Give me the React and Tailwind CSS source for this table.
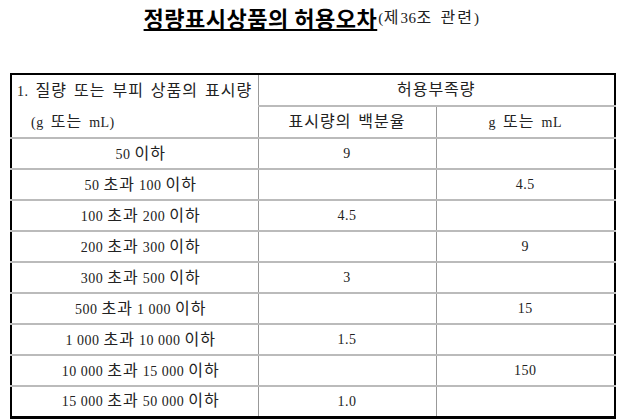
import React from 'react';

const rows = [
  ['50 이하', '9', ''],
  ['50 초과 100 이하', '', '4.5'],
  ['100 초과 200 이하', '4.5', ''],
  ['200 초과 300 이하', '', '9'],
  ['300 초과 500 이하', '3', ''],
  ['500 초과 1 000 이하', '', '15'],
  ['1 000 초과 10 000 이하', '1.5', ''],
  ['10 000 초과 15 000 이하', '', '150'],
  ['15 000 초과 50 000 이하', '1.0', ''],
];

const serif = { fontFamily: '"Liberation Serif", "Noto Sans CJK KR", serif' };

// hangul in the source font is wider than Noto's, so give it its own size
const K = ({ children, wide }) => {
  const parts = String(children).split(/([\uAC00-\uD7A3]+)/);
  return (
    <>
      {parts.map((p, i) =>
        /[\uAC00-\uD7A3]/.test(p) ? (
          <span key={i} className={wide ? 'text-[16px] tracking-[2px]' : 'text-[16px] tracking-[1px]'}>{p}</span>
        ) : (
          <span key={i}>{p}</span>
        )
      )}
    </>
  );
};

export default function App() {
  return (
    <div className="w-[623px] h-[419px] overflow-hidden bg-white text-[#222]" style={serif}>
      <div className="flex justify-center items-end h-[30px]">
        <span
          className="text-[22px] font-bold leading-[26px] tracking-[0.5px] underline decoration-2 underline-offset-[2px] text-black"
          style={{ fontFamily: '"Noto Sans CJK KR", sans-serif' }}
        >
          정량표시상품의 허용오차
        </span>
        <span className="text-[15px] leading-[24px] ml-[1px] tracking-[0.5px] [word-spacing:3px]"><K wide>(제36조 관련)</K></span>
      </div>

      <table className="ml-[10px] mt-[43px] w-[604px] border-collapse border-2 border-black text-[14px] tracking-[0.5px] table-fixed">
        <colgroup>
          <col className="w-[247px]" />
          <col className="w-[178px]" />
          <col className="w-[179px]" />
        </colgroup>
        <thead>
          <tr className="h-[31px]">
            <td rowSpan={2} className="align-top border-r border-[#999] border-b-2 border-b-[#bbb] pl-[5px] pt-0 leading-[31px] font-normal text-left whitespace-nowrap [word-spacing:3px]">
              <div className="h-[31px]"><K>1. 질량 또는 부피 상품의 표시량</K></div>
              <div className="h-[31px] pl-[14px]"><K>(g 또는 mL)</K></div>
            </td>
            <td colSpan={2} className="text-center border-b-2 border-[#bbb]"><K>허용부족량</K></td>
          </tr>
          <tr className="h-[31px] [word-spacing:3px]">
            <td className="text-center border-r border-[#999] border-b-2 border-b-[#bbb]"><K>표시량의 백분율</K></td>
            <td className="text-center border-b-2 border-[#bbb]"><K>g 또는 mL</K></td>
          </tr>
        </thead>
        <tbody>
          {rows.map((r, i) => (
            <tr key={i} className={i === rows.length - 1 ? 'h-[31px] border-b-[3px] border-black' : 'h-[31px] border-b-2 border-[#bbb]'}>
              <td className="text-center pl-[12px] border-r border-[#999]"><K>{r[0]}</K></td>
              <td className="text-center border-r border-[#999]">{r[1]}</td>
              <td className="text-center">{r[2]}</td>
            </tr>
          ))}
          <tr className="h-[31px]">
            <td className="border-r border-[#999]"></td>
            <td className="border-r border-[#999]"></td>
            <td></td>
          </tr>
        </tbody>
      </table>
    </div>
  );
}
